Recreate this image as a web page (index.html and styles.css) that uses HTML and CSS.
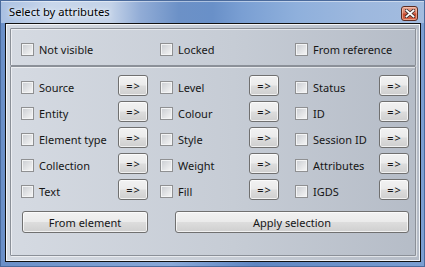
FILE: index.html
```html
<!DOCTYPE html>
<html lang="en">

<head>
    <meta charset="UTF-8">
    <title>Select by attributes</title>
    <link rel="stylesheet" href="styles.css">
</head>

<body>

    <div class="window">
        <!-- Title bar -->
        <div class="titlebar">
            <span class="title">Select by attributes</span>
            <span class="close">
                <svg width="10" height="9" viewBox="0 0 10 9">
                    <path d="M1.5 1.5 L8.5 7.5 M8.5 1.5 L1.5 7.5" stroke="#3b2a2a" stroke-width="3.4" stroke-linecap="square" />
                    <path d="M1.5 1.5 L8.5 7.5 M8.5 1.5 L1.5 7.5" stroke="#fff" stroke-width="1.8" stroke-linecap="square" />
                </svg>
            </span>
        </div>

        <div class="client">
            <!-- Flags -->
            <div class="group group-top">
                <div class="grid">
                    <label class="cell"><span class="check"></span>Not visible</label>
                    <label class="cell mid"><span class="check"></span>Locked</label>
                    <label class="cell last"><span class="check"></span>From reference</label>
                </div>
            </div>

            <!-- Attributes -->
            <div class="group group-main">
                <div class="grid rows">
                    <div class="cell"><label class="opt"><span class="check"></span>Source</label><button class="pick">=&gt;</button></div>
                    <div class="cell mid"><label class="opt"><span class="check"></span>Level</label><button class="pick">=&gt;</button></div>
                    <div class="cell last"><label class="opt"><span class="check"></span>Status</label><button class="pick">=&gt;</button></div>

                    <div class="cell"><label class="opt"><span class="check"></span>Entity</label><button class="pick">=&gt;</button></div>
                    <div class="cell mid"><label class="opt"><span class="check"></span>Colour</label><button class="pick">=&gt;</button></div>
                    <div class="cell last"><label class="opt"><span class="check"></span>ID</label><button class="pick">=&gt;</button></div>

                    <div class="cell"><label class="opt"><span class="check"></span>Element type</label><button class="pick">=&gt;</button></div>
                    <div class="cell mid"><label class="opt"><span class="check"></span>Style</label><button class="pick">=&gt;</button></div>
                    <div class="cell last"><label class="opt"><span class="check"></span>Session ID</label><button class="pick">=&gt;</button></div>

                    <div class="cell"><label class="opt"><span class="check"></span>Collection</label><button class="pick">=&gt;</button></div>
                    <div class="cell mid"><label class="opt"><span class="check"></span>Weight</label><button class="pick">=&gt;</button></div>
                    <div class="cell last"><label class="opt"><span class="check"></span>Attributes</label><button class="pick">=&gt;</button></div>

                    <div class="cell"><label class="opt"><span class="check"></span>Text</label><button class="pick">=&gt;</button></div>
                    <div class="cell mid"><label class="opt"><span class="check"></span>Fill</label><button class="pick">=&gt;</button></div>
                    <div class="cell last"><label class="opt"><span class="check"></span>IGDS</label><button class="pick">=&gt;</button></div>
                </div>

                <div class="actions">
                    <button class="btn from">From element</button>
                    <button class="btn apply">Apply selection</button>
                </div>
            </div>
        </div>
    </div>

</body>

</html>
```

FILE: styles.css
```css
/* General Styles */
* {
    margin: 0;
    padding: 0;
    box-sizing: border-box;
}

body {
    font-family: 'Noto Sans', 'Liberation Sans', sans-serif;
    font-size: 11px;
    color: #161616;
    background: #6f93c9;
}

.window {
    width: 425px;
    height: 267px;
    display: flex;
    flex-direction: column;
    padding: 0 4px 5px 5px;
    background: linear-gradient(to right, #6a8fc8, #8aa9d8 40%, #5f86c2 60%, #7c9fd2);
    box-shadow: inset 0 0 0 1px #4a6a9c;
}

/* Title bar */
.titlebar {
    height: 23px;
    display: flex;
    align-items: center;
    margin: 0 -4px 0 -5px;
    padding: 0 6px 1px 8px;
    background: linear-gradient(to right, #a9c0e2 0%, #c9d7eb 12%, #c3d2e8 26%, #91acd6 33%, #6c91c7 42%, #6990c8 50%, #7a9fd3 57%, #8fb0dc 70%, #9db8de 85%, #a3bcdf 100%);
    border: 1px solid #4a6a9c;
    border-bottom: none;
    box-shadow: inset 0 1px 0 rgba(255, 255, 255, 0.45);
}

.title {
    font-size: 11.2px;
    color: #000;
    text-shadow: 0 0 6px #eef4fb, 0 0 3px #eef4fb;
}

.close {
    margin-left: auto;
    width: 17px;
    height: 15px;
    margin-top: 3px;
    display: flex;
    justify-content: center;
    align-items: center;
    border: 1px solid #5c2c22;
    border-radius: 3px;
    background: linear-gradient(#e9a794 0%, #d97b63 45%, #c4462b 55%, #d6664a 100%);
    box-shadow: inset 0 0 0 1px rgba(255, 220, 200, 0.5);
}

/* Client area */
.client {
    flex: 1;
    display: flex;
    flex-direction: column;
    padding: 4px 4px 5px 4px;
    border: 1px solid #111;
    box-shadow: inset 0 0 0 1px #f4f6f9;
    background: linear-gradient(to right, #d5dae2, #c6ccd5 55%, #b5bcc7);
}

.group {
    border: 1px solid #8b9098;
    box-shadow: inset 1px 1px 0 rgba(255, 255, 255, 0.55), 1px 1px 0 rgba(255, 255, 255, 0.55);
    border-radius: 1px;
}

.group-top {
    height: 38px;
    padding: 14px 0 0 10px;
}

.group-main {
    flex: 1;
    padding: 8px 0 0 10px;
}

.grid {
    display: grid;
    grid-template-columns: 139px 135px 114px;
}

.rows {
    row-gap: 5px;
}

.cell {
    display: flex;
    align-items: center;
    padding-right: 12px;
    height: 13px;
    line-height: 13px;
    white-space: nowrap;
}

.rows .cell {
    height: 21px;
}

.cell.mid {
    padding-right: 16px;
}

.cell.last {
    padding-right: 0;
}

.opt {
    display: flex;
    align-items: center;
    margin-top: 4px;
    line-height: 13px;
}

.check {
    width: 13px;
    height: 13px;
    margin-right: 5px;
    flex: none;
    border: 1px solid #8f9092;
    box-shadow: inset 0 0 0 1px #f3f4f5;
    background: linear-gradient(135deg, #c9ccd1, #f7f7f7);
}

/* Buttons */
button {
    font-family: inherit;
    font-size: 11px;
    color: #161616;
    border: 1px solid #707070;
    border-radius: 3px;
    background: linear-gradient(#f2f2f2 0%, #ebebeb 48%, #dddddd 52%, #cfcfcf 100%);
    box-shadow: inset 0 0 0 1px rgba(255, 255, 255, 0.7);
}

.pick {
    margin-left: auto;
    width: 30px;
    height: 21px;
    line-height: 17px;
    letter-spacing: 1px;
    padding-left: 1px;
}

.actions {
    display: flex;
    gap: 27px;
    margin-top: 11px;
    padding-left: 1px;
}

.btn {
    height: 22px;
}

.from {
    width: 126px;
}

.apply {
    width: 234px;
}
```
